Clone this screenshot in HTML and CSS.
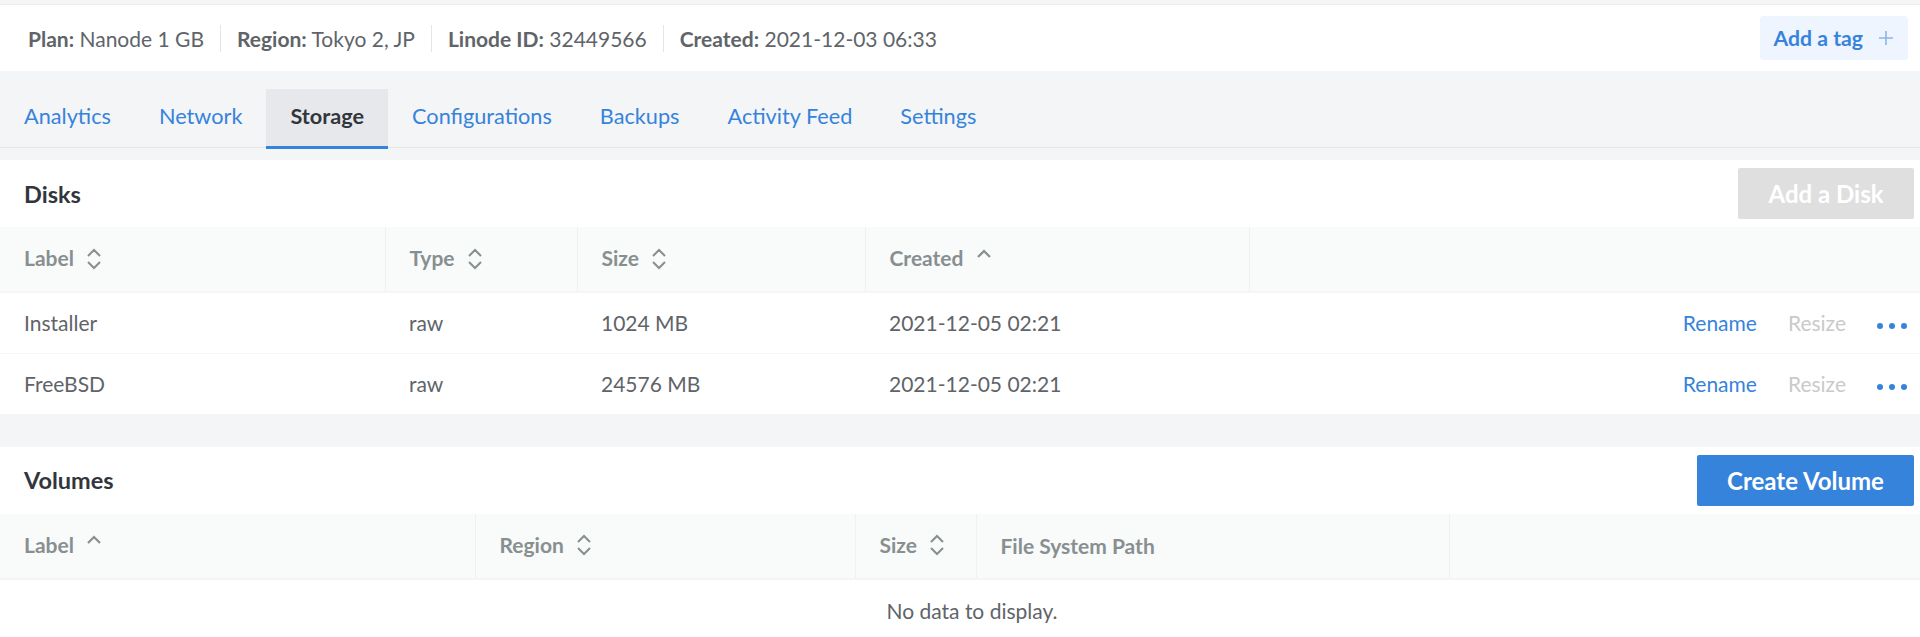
FILE: index.html
```html
<!DOCTYPE html>
<html>
<head>
<meta charset="utf-8">
<link rel="stylesheet" href="styles.css">
</head>
<body>
<div class="topstrip"></div>
<header class="summary">
  <div class="summary-item"><b>Plan:</b> Nanode 1 GB</div>
  <div class="summary-item"><b>Region:</b> Tokyo 2, JP</div>
  <div class="summary-item"><b>Linode ID:</b> 32449566</div>
  <div class="summary-item last"><b>Created:</b> 2021-12-03 06:33</div>
  <button class="tag-btn">Add a tag <svg class="plus" viewBox="0 0 14 14" width="14" height="14"><path d="M7 0v14M0 7h14" stroke="#8cb5ec" stroke-width="1.6"/></svg></button>
</header>
<nav class="tabbar">
  <div class="tabs">
    <a class="tab">Analytics</a>
    <a class="tab">Network</a>
    <a class="tab active">Storage</a>
    <a class="tab">Configurations</a>
    <a class="tab">Backups</a>
    <a class="tab">Activity Feed</a>
    <a class="tab">Settings</a>
  </div>
</nav>

<section class="panel">
  <div class="panel-head">
    <h2>Disks</h2>
    <button class="btn disabled disk-btn">Add a Disk</button>
  </div>
  <table class="grid">
    <thead>
      <tr>
        <th class="d-label">Label <svg class="sort" viewBox="0 0 18 24" width="18" height="24"><path d="M3 9l6-6 6 6M3 15l6 6 6-6" fill="none" stroke="#888f91" stroke-width="2"/></svg></th>
        <th class="d-type">Type <svg class="sort" viewBox="0 0 18 24" width="18" height="24"><path d="M3 9l6-6 6 6M3 15l6 6 6-6" fill="none" stroke="#888f91" stroke-width="2"/></svg></th>
        <th class="d-size">Size <svg class="sort" viewBox="0 0 18 24" width="18" height="24"><path d="M3 9l6-6 6 6M3 15l6 6 6-6" fill="none" stroke="#888f91" stroke-width="2"/></svg></th>
        <th class="d-created">Created <svg class="caret" viewBox="0 0 18 24" width="18" height="24"><path d="M3 10l6-6 6 6" fill="none" stroke="#888f91" stroke-width="2.2"/></svg></th>
        <th class="d-actions"></th>
      </tr>
    </thead>
    <tbody>
      <tr>
        <td>Installer</td><td>raw</td><td>1024 MB</td><td>2021-12-05 02:21</td>
        <td class="actions"><a class="link">Rename</a><a class="link off">Resize</a><span class="dots"><i></i><i></i><i></i></span></td>
      </tr>
      <tr>
        <td>FreeBSD</td><td>raw</td><td>24576 MB</td><td>2021-12-05 02:21</td>
        <td class="actions"><a class="link">Rename</a><a class="link off">Resize</a><span class="dots"><i></i><i></i><i></i></span></td>
      </tr>
    </tbody>
  </table>
</section>

<section class="panel volumes">
  <div class="panel-head">
    <h2>Volumes</h2>
    <button class="btn primary">Create Volume</button>
  </div>
  <table class="grid vgrid">
    <thead>
      <tr>
        <th class="v-label">Label <svg class="caret" viewBox="0 0 18 24" width="18" height="24"><path d="M3 10l6-6 6 6" fill="none" stroke="#888f91" stroke-width="2.2"/></svg></th>
        <th class="v-region">Region <svg class="sort" viewBox="0 0 18 24" width="18" height="24"><path d="M3 9l6-6 6 6M3 15l6 6 6-6" fill="none" stroke="#888f91" stroke-width="2"/></svg></th>
        <th class="v-size">Size <svg class="sort" viewBox="0 0 18 24" width="18" height="24"><path d="M3 9l6-6 6 6M3 15l6 6 6-6" fill="none" stroke="#888f91" stroke-width="2"/></svg></th>
        <th class="v-path">File System Path</th>
        <th class="v-actions"></th>
      </tr>
    </thead>
    <tbody>
      <tr><td colspan="5" class="empty">No data to display.</td></tr>
    </tbody>
  </table>
</section>
</body>
</html>
```

FILE: styles.css
```css
* { box-sizing: border-box; }
html, body { margin: 0; padding: 0; }
body {
  background: #f4f5f6;
  font-family: Lato, "Open Sans", sans-serif;
  color: #606469;
  overflow: hidden;
}
.topstrip { height: 5px; border-bottom: 1px solid #ebecee; background: #f4f5f6; }

.summary {
  display: flex;
  align-items: center;
  height: 66px;
  background: #fff;
  padding: 0 12px 0 12px;
  font-size: 21px;
}
.summary-item {
  padding: 0 16px;
  border-right: 1px solid #e3e5e8;
  line-height: 27px;
  color: #606469;
}
.summary-item b { font-weight: 700; }
.summary-item.last { border-right: none; }
.tag-btn {
  margin-left: auto;
  height: 44px;
  padding: 0 15px 0 14px;
  border: none;
  border-radius: 4px;
  background: #eff5fe;
  color: #3683dc;
  font: 700 21.2px Lato, sans-serif;
  display: flex;
  align-items: center;
  gap: 16px;
}

.tabbar { padding-top: 18px; background: #f4f5f6; }
.tabs { display: flex; border-bottom: 1px solid #e3e5e8; height: 59px; }
.tab {
  display: flex;
  align-items: center;
  padding: 0 24px 4px;
  height: 60px;
  color: #3683dc;
  font-size: 21.7px;
  border-bottom: 3px solid transparent;
}
.tab.active {
  background: #e7e8ec;
  color: #32363c;
  font-weight: 700;
  border-bottom-color: #3683dc;
}

.panel { background: #fff; margin-top: 12px; }
.panel.volumes { margin-top: 32px; }
.panel-head {
  display: flex;
  align-items: center;
  justify-content: space-between;
  height: 67px;
  padding: 0 6px 0 24px;
}
.panel-head h2 {
  margin: 0;
  font-size: 23.5px;
  font-weight: 700;
  color: #32363c;
}
.btn {
  height: 51px;
  padding: 0 30px;
  border: none;
  border-radius: 2px;
  font: 700 24px Lato, sans-serif;
  color: #fff;
}
.btn.disabled { background: #dfdfdf; }
.disk-btn { width: 176px; padding: 0; }
.btn.primary { background: #3683dc; width: 217px; padding: 0; }

.grid { width: 100%; border-collapse: collapse; font-size: 21px; }
.grid th {
  height: 65px;
  background: #f9fafa;
  color: #888f91;
  font-weight: 700;
  text-align: left;
  padding: 0 24px;
  border-bottom: 2px solid #f4f5f6;
  border-left: 1px solid #eef0f1;
  white-space: nowrap;
}
.grid th:first-child { border-left: none; }
.grid th svg { vertical-align: middle; margin-left: 6px; position: relative; top: -2px; }
.grid td {
  height: 61px;
  padding: 0 24px;
  color: #606469;
  border-bottom: 1px solid #f4f5f6;
  white-space: nowrap;
}
.d-label { width: 385px; }
.d-type { width: 192px; }
.d-size { width: 288px; }
.d-created { width: 384px; }
.v-label { width: 475px; }
.v-region { width: 380px; }
.v-size { width: 121px; }
.v-path { width: 473px; }

.actions { text-align: right; padding-right: 13px !important; }
.link { color: #3683dc; margin-left: 31px; }
.link.off { color: #c9cacb; }
.dots { display: inline-flex; gap: 6px; margin-left: 31px; vertical-align: middle; }
.dots i { width: 6px; height: 6px; border-radius: 50%; background: #3683dc; display: block; }

.vgrid td.empty { text-align: center; height: 62px; border-bottom: none; padding: 0 0 0 24px; }
.vgrid th { height: 65px; }
```
